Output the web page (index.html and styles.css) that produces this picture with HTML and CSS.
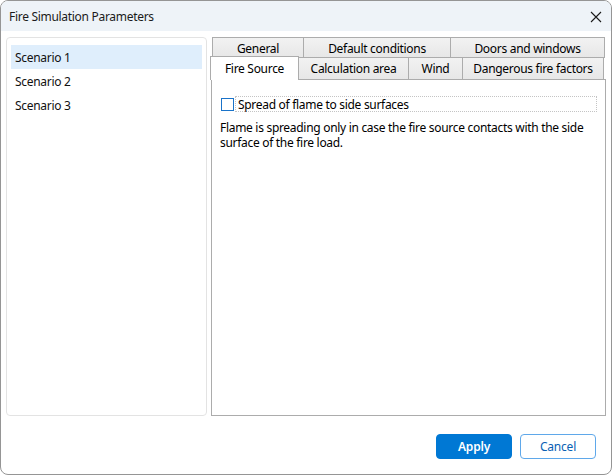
FILE: index.html
```html
<!DOCTYPE html>
<html>
<head>
<meta charset="utf-8">
<link rel="stylesheet" href="styles.css">
</head>
<body>
<div class="window">
  <div class="titlebar">
    <span class="title">Fire Simulation Parameters</span>
    <span class="close">
      <svg width="12" height="12" viewBox="0 0 12 12"><path d="M1 1 L11 11 M11 1 L1 11" stroke="#1a1a1a" stroke-width="1.1" fill="none"/></svg>
    </span>
  </div>
  <div class="main">
    <div class="list">
      <div class="item selected">Scenario 1</div>
      <div class="item">Scenario 2</div>
      <div class="item">Scenario 3</div>
    </div>
    <div class="tabs">
      <div class="row row1">
        <div class="tab t-general">General</div>
        <div class="tab t-default">Default conditions</div>
        <div class="tab t-doors">Doors and windows</div>
      </div>
      <div class="row row2">
        <div class="tab active t-fire">Fire Source</div>
        <div class="tab t-calc">Calculation area</div>
        <div class="tab t-wind">Wind</div>
        <div class="tab t-danger">Dangerous fire factors</div>
      </div>
      <div class="panel">
        <div class="check">
          <span class="box"></span>
          <span class="label">Spread of flame to side surfaces</span>
        </div>
        <p class="desc">Flame is spreading only in case the fire source contacts with the side surface of the fire load.</p>
      </div>
    </div>
  </div>
  <div class="footer">
    <button class="btn primary">Apply</button>
    <button class="btn secondary">Cancel</button>
  </div>
</div>
</body>
</html>
```
FILE: styles.css
```css
* { box-sizing: border-box; }
html, body { margin: 0; padding: 0; background: #ffffff; }
body {
  font-family: "Segoe UI", "Noto Sans", sans-serif;
  font-size: 12px;
  letter-spacing: -0.3px;
  color: #000;
}
.window {
  width: 612px;
  height: 475px;
  border: 1px solid #959595;
  border-radius: 8px;
  overflow: hidden;
  background: #fff;
  display: flex;
  flex-direction: column;
}
.titlebar {
  height: 30px;
  flex: none;
  background: #eef3f8;
  display: flex;
  align-items: center;
  justify-content: space-between;
  padding: 0 9px 0 8px;
}
.title { color: #1b1b1b; font-size: 12px; }
.close { display: flex; width: 12px; height: 12px; margin-top: 1px; }
.main {
  display: flex;
  gap: 4px;
  padding: 6px 5px 0 5px;
  height: 385px;
  flex: none;
}
.list {
  width: 201px;
  height: 379px;
  border: 1px solid #e3e3e3;
  border-radius: 4px;
  padding: 7px 4px;
  flex: none;
}
.item {
  height: 24px;
  line-height: 22px;
  padding: 2px 0 0 4px;
  color: #111;
}
.item.selected { background: #dfeefc; }
.tabs {
  width: 395px;
  height: 379px;
  display: flex;
  flex-direction: column;
  flex: none;
}
.row { display: flex; flex: none; }
.row1 { height: 21px; padding-left: 1px; }
.row2 { height: 22px; margin-top: -1px; }
.tab {
  border: 1px solid #acacac;
  background: linear-gradient(#f2f2f2, #e7e7e7);
  text-align: center;
  line-height: 21px;
  color: #000;
  white-space: nowrap;
}
.row1 .tab { height: 21px; }
.row1 .tab + .tab { margin-left: -1px; }
.row2 .tab { height: 22px; border-bottom: none; line-height: 22px; margin-left: -1px; }
.t-general { width: 92px; }
.t-default { width: 148px; }
.t-doors { width: 155px; }
.t-fire { width: 89px; }
.t-calc { width: 111px; }
.t-wind { width: 55px; }
.t-danger { width: 142px; }
.row2 .tab.active {
  position: relative;
  z-index: 1;
  background: #fff;
  height: 24px;
  margin-top: -1px;
  margin-left: -1px;
  line-height: 24px;
}
.panel {
  flex: 1;
  border: 1px solid #acacac;
  background: #fff;
  padding: 16px 8px 0 8px;
}
.check {
  display: flex;
  align-items: center;
  height: 16px;
}
.box {
  width: 13px;
  height: 13px;
  border: 1px solid #1a73c9;
  background: #fff;
  margin-left: 1px;
  flex: none;
}
.label {
  margin-left: 1px;
  height: 16px;
  line-height: 16px;
  flex: 1;
  border: 1px dotted #c4c4c4;
  padding-left: 2px;
}
.desc {
  margin: 8px 0 0 0;
  line-height: 15px;
  width: 385px;
}
.footer {
  flex: 1;
  display: flex;
  justify-content: flex-end;
  align-items: flex-start;
  gap: 8px;
  padding: 18px 15px 0 0;
}
.btn {
  width: 76px;
  height: 25px;
  border-radius: 4px;
  font-family: "Segoe UI", "Noto Sans", sans-serif;
  font-size: 12px;
  letter-spacing: -0.2px;
  padding: 0;
}
.primary {
  background: #0078d4;
  border: 1px solid #0078d4;
  color: #fff;
  font-weight: 600;
}
.secondary {
  background: #fff;
  border: 1px solid #5fa8ea;
  color: #0a5fb4;
}
```
